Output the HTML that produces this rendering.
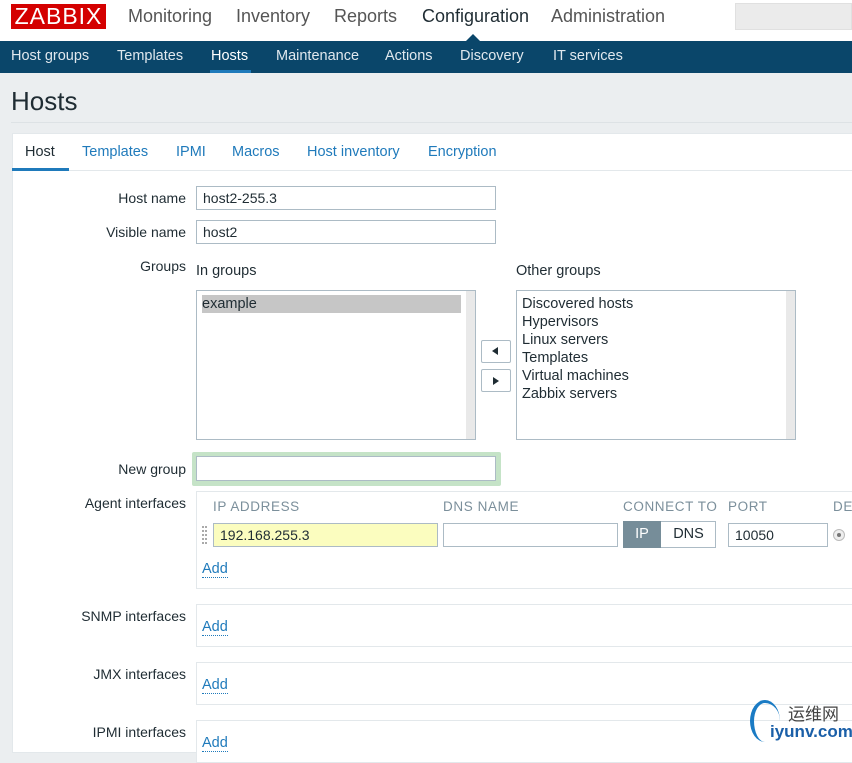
<!DOCTYPE html>
<html><head><meta charset="utf-8"><style>
*{box-sizing:border-box;margin:0;padding:0}
body{width:852px;height:745px;overflow:hidden;background:#ebeef0;font-family:"Liberation Sans",Arial,sans-serif;position:relative;color:#1f2c33}
.a{position:absolute;white-space:nowrap}
.top{left:0;top:0;width:852px;height:41px;background:#fff}
.logo{left:11px;top:4px;width:95px;height:25px;background:#d40000;color:#fff;font-size:23px;line-height:25px;text-align:center;letter-spacing:1px}
.m{top:6px;font-size:18px;color:#555;}
.nav{left:0;top:41px;width:852px;height:32px;background:#0a466a}
.n{top:48px;font-size:14.5px;color:#e0e8ee}
.lab{font-size:14px;color:#1f2c33;text-align:right;width:180px;left:6px}
.inp{background:#fff;border:1px solid #acbbc5;font-size:14px;padding-left:6px;line-height:22px;color:#1f2c33}
.t{top:144px;font-size:14.5px;color:#1f7abb}
.hd{top:499px;font-size:13.5px;color:#7b8f9b;letter-spacing:0.6px}
.add{font-size:14.5px;color:#1f7abb;border-bottom:1px dotted #1f7abb;line-height:16px}
.box{background:#fff;border:1px solid #e3e8eb}
.li{font-size:14.5px;color:#1f2c33;line-height:18px}
</style></head><body>
<div class="a top"></div>
<div class="a logo">ZABBIX</div>
<div class="a m" style="left:128px">Monitoring</div>
<div class="a m" style="left:236px">Inventory</div>
<div class="a m" style="left:334px">Reports</div>
<div class="a m" style="left:422px;color:#1f2c33">Configuration</div>
<div class="a m" style="left:551px">Administration</div>
<div class="a" style="left:735px;top:3px;width:117px;height:27px;background:#ebebeb;border:1px solid #e0e0e0"></div>
<div class="a nav"></div>
<div class="a" style="left:466px;top:34px;width:0;height:0;border-left:7px solid transparent;border-right:7px solid transparent;border-bottom:7px solid #0a466a"></div>
<div class="a n" style="left:11px">Host groups</div>
<div class="a n" style="left:117px">Templates</div>
<div class="a n" style="left:211px;color:#fff">Hosts</div>
<div class="a" style="left:210px;top:70px;width:41px;height:3px;background:#1f7abb"></div>
<div class="a n" style="left:276px">Maintenance</div>
<div class="a n" style="left:385px">Actions</div>
<div class="a n" style="left:460px">Discovery</div>
<div class="a n" style="left:553px">IT services</div>
<div class="a" style="left:11px;top:86px;font-size:26px;color:#1f2c33">Hosts</div>
<div class="a" style="left:11px;top:122px;width:841px;height:1px;background:#dde2e5"></div>
<div class="a" style="left:12px;top:133px;width:840px;height:620px;background:#fff;border:1px solid #e3e8eb;border-right:none"></div>
<div class="a" style="left:13px;top:170px;width:839px;height:1px;background:#e3e8eb"></div>
<div class="a t" style="left:25px;color:#1f2c33">Host</div>
<div class="a" style="left:12px;top:168px;width:57px;height:3px;background:#1f7abb"></div>
<div class="a t" style="left:82px">Templates</div>
<div class="a t" style="left:176px">IPMI</div>
<div class="a t" style="left:232px">Macros</div>
<div class="a t" style="left:307px">Host inventory</div>
<div class="a t" style="left:428px">Encryption</div>

<div class="a lab" style="top:190px">Host name</div>
<div class="a inp" style="left:196px;top:186px;width:300px;height:24px">host2-255.3</div>
<div class="a lab" style="top:224px">Visible name</div>
<div class="a inp" style="left:196px;top:220px;width:300px;height:24px">host2</div>
<div class="a lab" style="top:258px">Groups</div>
<div class="a li" style="left:196px;top:262px">In groups</div>
<div class="a li" style="left:516px;top:262px">Other groups</div>
<div class="a" style="left:196px;top:290px;width:280px;height:150px;border:1px solid #acbbc5;background:#fff"></div>
<div class="a" style="left:466px;top:291px;width:9px;height:148px;background:#e9e9e9"></div>
<div class="a li" style="left:202px;top:295px;width:259px;height:18px;background:#c6c6c6;padding-left:0">example</div>
<div class="a" style="left:481px;top:340px;width:30px;height:23px;border:1px solid #acbbc5;border-radius:2px;background:#fff"></div>
<div class="a" style="left:492px;top:347px;border-top:4px solid transparent;border-bottom:4px solid transparent;border-right:6px solid #1f2c33"></div>
<div class="a" style="left:481px;top:369px;width:30px;height:23px;border:1px solid #acbbc5;border-radius:2px;background:#fff"></div>
<div class="a" style="left:493px;top:377px;border-top:4px solid transparent;border-bottom:4px solid transparent;border-left:6px solid #1f2c33"></div>
<div class="a" style="left:516px;top:290px;width:280px;height:150px;border:1px solid #acbbc5;background:#fff"></div>
<div class="a" style="left:786px;top:291px;width:9px;height:148px;background:#e9e9e9"></div>
<div class="a li" style="left:522px;top:295px">Discovered hosts<br>Hypervisors<br>Linux servers<br>Templates<br>Virtual machines<br>Zabbix servers</div>

<div class="a lab" style="top:461px">New group</div>
<div class="a" style="left:192px;top:452px;width:309px;height:34px;background:#c5e3c7;border-radius:2px"></div>
<div class="a inp" style="left:196px;top:456px;width:300px;height:25px"></div>

<div class="a lab" style="top:495px">Agent interfaces</div>
<div class="a box" style="left:196px;top:491px;width:660px;height:98px"></div>
<div class="a hd" style="left:213px">IP ADDRESS</div>
<div class="a hd" style="left:443px">DNS NAME</div>
<div class="a hd" style="left:623px">CONNECT TO</div>
<div class="a hd" style="left:728px">PORT</div>
<div class="a hd" style="left:833px">DE</div>
<div class="a" style="left:202px;top:526px;width:5px;height:18px;border-left:2px dotted #aaa;border-right:2px dotted #aaa"></div>
<div class="a inp" style="left:213px;top:523px;width:225px;height:24px;background:#fbfdbf">192.168.255.3</div>
<div class="a inp" style="left:443px;top:523px;width:175px;height:24px"></div>
<div class="a" style="left:623px;top:521px;width:93px;height:27px;border:1px solid #acbbc5;background:#fff"></div>
<div class="a" style="left:623px;top:521px;width:38px;height:27px;background:#768d99;color:#fff;font-size:14.5px;line-height:27px;text-align:center">IP</div>
<div class="a" style="left:661px;top:521px;width:55px;height:27px;font-size:14.5px;line-height:27px;text-align:center;color:#1f2c33">DNS</div>
<div class="a inp" style="left:728px;top:523px;width:100px;height:24px">10050</div>
<div class="a" style="left:833px;top:529px;width:12px;height:12px;border-radius:50%;border:1px solid #bbb;background:#eee"></div>
<div class="a" style="left:837px;top:533px;width:4px;height:4px;border-radius:50%;background:#777"></div>
<div class="a add" style="left:202px;top:561px">Add</div>

<div class="a lab" style="top:608px">SNMP interfaces</div>
<div class="a box" style="left:196px;top:604px;width:660px;height:43px"></div>
<div class="a add" style="left:202px;top:619px">Add</div>
<div class="a lab" style="top:666px">JMX interfaces</div>
<div class="a box" style="left:196px;top:662px;width:660px;height:43px"></div>
<div class="a add" style="left:202px;top:677px">Add</div>
<div class="a lab" style="top:724px">IPMI interfaces</div>
<div class="a box" style="left:196px;top:720px;width:660px;height:43px"></div>
<div class="a add" style="left:202px;top:735px">Add</div>

<div class="a" style="left:750px;top:700px;width:30px;height:42px;border-radius:50%;border-left:4px solid #1a7bc4;border-top:3px solid #1a7bc4"></div>
<div class="a" style="left:788px;top:700px;font-size:17px;color:#444;font-family:'Noto Sans CJK SC',sans-serif">运维网</div>
<div class="a" style="left:770px;top:722px;font-size:17px;font-weight:bold;color:#1a5fa8">iyunv.com</div>
</body></html>
